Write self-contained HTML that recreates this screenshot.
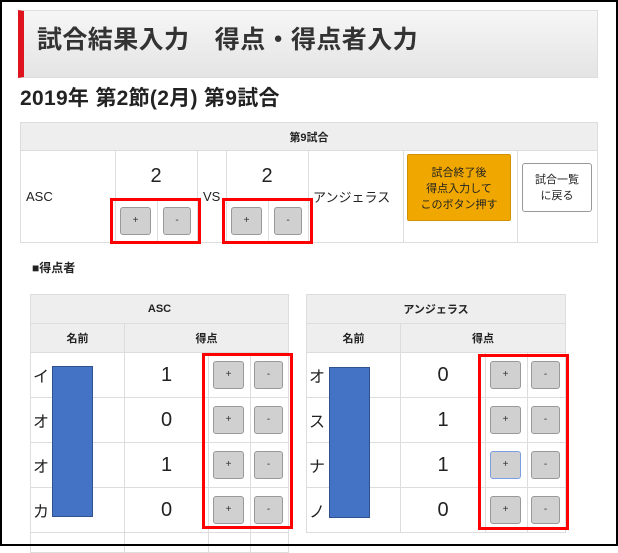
<html><head><style>
*{margin:0;padding:0;box-sizing:border-box}
body{width:618px;height:546px;overflow:hidden;background:#fff;font-family:"Liberation Sans","Noto Sans CJK JP",sans-serif;position:relative;color:#222}
.a{position:absolute}
.frame{left:0;top:0;width:618px;height:546px;border:2px solid #000}
.hd{left:18px;top:10px;width:580px;height:68px;border:1px solid #ddd;border-left:6px solid #e0141e;background:linear-gradient(#f6f6f6,#e4e4e4);font-size:25px;letter-spacing:0.4px;font-weight:bold;color:#333;line-height:58px;padding-left:13px}
table{border-collapse:collapse;position:absolute}
td{border:1px solid #ddd;font-size:13px}
.btn{position:absolute;width:31px;height:28px;background:#d0d0d0;border:1px solid #999;border-radius:3px;font-size:10px;text-align:center;line-height:26px;color:#333}
.red{position:absolute;border:3px solid #f00}
.th{background:#eee;text-align:center;font-weight:bold;font-size:11px}
.blue{position:absolute;background:#4472c4;border:1px solid #2f528f}
.num{font-size:20px;text-align:center}
.nm{font-size:16px;padding-left:2px}
</style></head><body>
<div class="a hd">試合結果入力　得点・得点者入力</div>
<div class="a" style="left:20px;top:82px;font-size:21px;letter-spacing:0.3px;font-weight:bold">2019年 第2節(2月) 第9試合</div>
<table style="left:20px;top:122px;width:578px">
<tr style="height:28px"><td colspan="7" class="th">第9試合</td></tr>
<tr style="height:92px"><td style="width:95px;padding-left:5px">ASC</td><td style="width:82px"></td><td style="width:29px;padding-left:5px">VS</td><td style="width:82px"></td><td style="width:95px;padding-left:4px;font-size:13px">アンジェラス</td><td style="width:114px"></td><td></td></tr>
</table>
<div class="a num" style="left:115px;top:165px;width:82px">2</div>
<div class="a num" style="left:226px;top:165px;width:82px">2</div>
<div class="a" style="left:157px;top:200px;width:1px;height:42px;background:#ddd"></div>
<div class="a" style="left:268px;top:200px;width:1px;height:42px;background:#ddd"></div>
<div class="btn" style="left:120px;top:207px">+</div><div class="btn" style="left:163px;top:207px;width:28px">-</div>
<div class="btn" style="left:231px;top:207px">+</div><div class="btn" style="left:274px;top:207px;width:28px">-</div>
<div class="red" style="left:110px;top:198px;width:91px;height:46px"></div>
<div class="red" style="left:222px;top:198px;width:91px;height:46px"></div>
<div class="a" style="left:407px;top:154px;width:104px;height:67px;background:#f0a800;border:1px solid #d09000;border-radius:2px;font-size:11px;text-align:center;padding-top:10px;line-height:16px">試合終了後<br>得点入力して<br>このボタン押す</div>
<div class="a" style="left:522px;top:163px;width:70px;height:49px;border:1px solid #999;border-radius:3px;font-size:11px;text-align:center;padding-top:8px;line-height:16px">試合一覧<br>に戻る</div>
<div class="a" style="left:32px;top:259px;font-size:12px;font-weight:bold">■得点者</div>

<table style="left:30px;top:294px;width:259px">
<tr style="height:29px"><td colspan="4" class="th">ASC</td></tr>
<tr style="height:29px"><td class="th" style="width:94px">名前</td><td class="th" colspan="3">得点</td></tr>
<tr style="height:45px"><td class="nm">イ</td><td class="num" style="width:84px">1</td><td style="width:42px"></td><td></td></tr>
<tr style="height:45px"><td class="nm">オ</td><td class="num">0</td><td></td><td></td></tr>
<tr style="height:45px"><td class="nm">オ</td><td class="num">1</td><td></td><td></td></tr>
<tr style="height:45px"><td class="nm">カ</td><td class="num">0</td><td></td><td></td></tr>
<tr style="height:20px"><td></td><td></td><td></td><td></td></tr>
</table>
<table style="left:306px;top:294px;width:260px">
<tr style="height:29px"><td colspan="4" class="th">アンジェラス</td></tr>
<tr style="height:29px"><td class="th" style="width:94px">名前</td><td class="th" colspan="3">得点</td></tr>
<tr style="height:45px"><td class="nm">オ</td><td class="num" style="width:85px">0</td><td style="width:42px"></td><td></td></tr>
<tr style="height:45px"><td class="nm">ス</td><td class="num">1</td><td></td><td></td></tr>
<tr style="height:45px"><td class="nm">ナ</td><td class="num">1</td><td></td><td></td></tr>
<tr style="height:45px"><td class="nm">ノ</td><td class="num">0</td><td></td><td></td></tr>
</table>

<div class="btn" style="left:213px;top:361px">+</div><div class="btn" style="left:254px;top:361px;width:29px">-</div>
<div class="btn" style="left:213px;top:406px">+</div><div class="btn" style="left:254px;top:406px;width:29px">-</div>
<div class="btn" style="left:213px;top:451px">+</div><div class="btn" style="left:254px;top:451px;width:29px">-</div>
<div class="btn" style="left:213px;top:496px">+</div><div class="btn" style="left:254px;top:496px;width:29px">-</div>
<div class="btn" style="left:490px;top:361px">+</div><div class="btn" style="left:531px;top:361px;width:29px">-</div>
<div class="btn" style="left:490px;top:406px">+</div><div class="btn" style="left:531px;top:406px;width:29px">-</div>
<div class="btn" style="left:490px;top:451px;border-color:#7a9ee0">+</div><div class="btn" style="left:531px;top:451px;width:29px">-</div>
<div class="btn" style="left:490px;top:496px">+</div><div class="btn" style="left:531px;top:496px;width:29px">-</div>
<div class="red" style="left:202px;top:353px;width:91px;height:176px"></div>
<div class="red" style="left:478px;top:354px;width:91px;height:176px"></div>
<div class="blue" style="left:52px;top:366px;width:41px;height:151px"></div>
<div class="blue" style="left:329px;top:367px;width:41px;height:151px"></div>
<div class="a frame"></div>
</body></html>
